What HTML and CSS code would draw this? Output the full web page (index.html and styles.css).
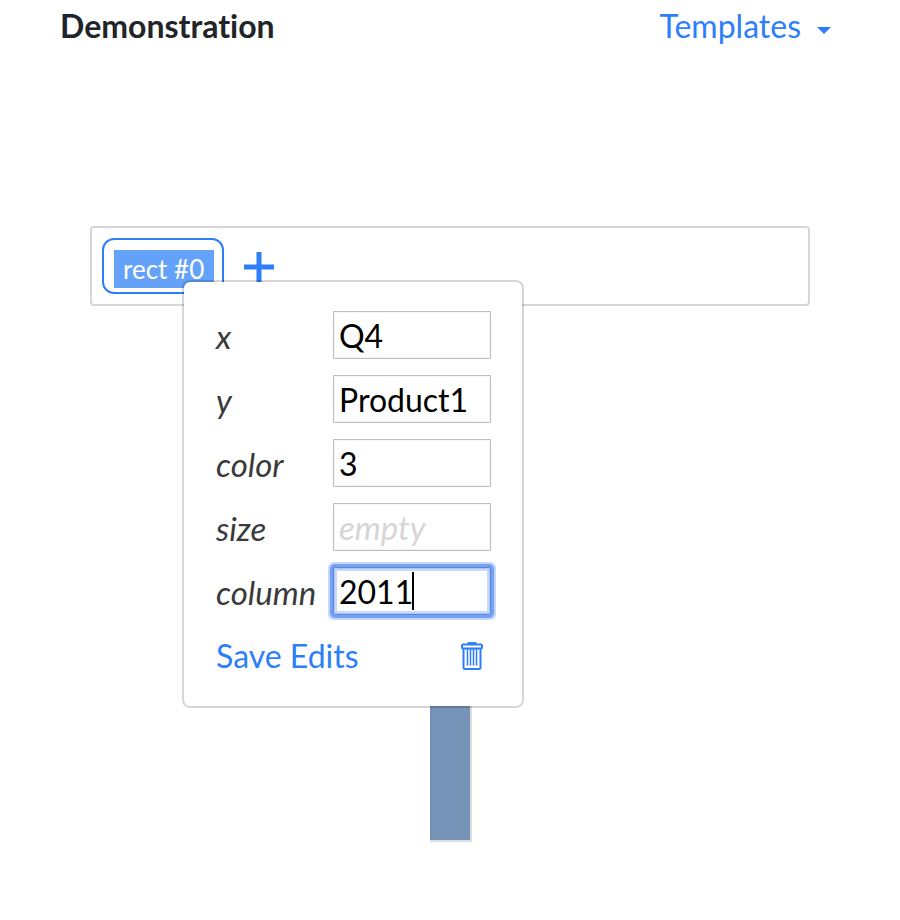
FILE: index.html
```html
<!DOCTYPE html>
<html lang="en">
<head>
<meta charset="utf-8">
<title>Demonstration</title>
<link rel="stylesheet" href="styles.css">
</head>
<body>
<header class="header">
  <h1 class="title">Demonstration</h1>
  <button class="templates" type="button">Templates
    <svg class="arrow" viewBox="0 0 14 7" aria-hidden="true"><path d="M0 0H14L7 7Z"/></svg>
  </button>
</header>
<main class="main">
  <section class="shelf">
    <button class="mark" type="button"><span class="mark-label">rect #0</span></button>
    <button class="add" type="button" aria-label="Add mark">
      <svg class="plus" viewBox="0 0 30 30" aria-hidden="true"><path d="M15 0V30M0 15H30"/></svg>
    </button>
    <form class="popover">
      <label class="name" for="x">x</label>
      <input class="field" id="x" type="text" value="Q4">
      <label class="name" for="y">y</label>
      <input class="field" id="y" type="text" value="Product1">
      <label class="name" for="color">color</label>
      <input class="field" id="color" type="text" value="3">
      <label class="name" for="size">size</label>
      <input class="field" id="size" type="text" placeholder="empty">
      <label class="name" for="column">column</label>
      <span class="active"><input class="field field-active" id="column" type="text" value="2011"><span class="caret"></span></span>
      <div class="actions">
        <button class="save" type="button">Save Edits</button>
        <button class="delete" type="button" aria-label="Delete mark">
          <svg class="trash" viewBox="0 0 24 28" aria-hidden="true">
            <path class="lid" d="M7 2Q7 0 9 0H15Q17 0 17 2Z"/>
            <rect x="2" y="2.500" width="20" height="4" rx="1"/>
            <path d="M3.500 7V25.500Q3.500 27 5 27H19Q20.500 27 20.500 25.500V7"/>
            <path class="slats" d="M7.500 7V23.500M10.500 7V23.500M13.500 7V23.500M16.500 7V23.500"/>
          </svg>
        </button>
      </div>
    </form>
  </section>
  <div class="chart"><div class="bar"></div></div>
</main>
</body>
</html>
```

FILE: styles.css
```css
* { box-sizing: border-box; }
body {
  margin: 0;
  background: #fff;
  color: #212529;
  font: 32px/48px Lato, sans-serif;
  font-variant-ligatures: none;
}
button {
  padding: 0;
  border: 0;
  background: none;
  color: #2d7ff9;
  font: inherit;
  font-variant-ligatures: none;
  cursor: pointer;
}
svg { display: block; fill: none; }
.header {
  display: flex;
  justify-content: space-between;
  padding: 2px 69px 0 60px;
}
.title { margin: 0; font: inherit; font-weight: 700; font-variant-ligatures: none; }
.templates { display: flex; align-items: center; gap: 16px; }
.arrow { width: 14px; height: 7px; margin-top: 8px; fill: #2d7ff9; }
.main { padding: 176px 90px 0; }
.shelf {
  position: relative;
  display: flex;
  align-items: flex-start;
  gap: 20px;
  padding: 10px;
  border: 2px solid #d6d6d6;
  border-radius: 4px;
  height: 80px;
}
.mark {
  padding: 10px 8px 4px 10px;
  border: 2px solid #2d7ff9;
  border-radius: 12px;
}
.mark-label {
  display: block;
  padding: 0 10px 0 9px;
  background: #64a2fa;
  color: #fff;
  font-size: 26px;
  line-height: 38px;
}
.add { margin-top: 14px; }
.plus { width: 30px; height: 30px; stroke: #2d7ff9; stroke-width: 5; }
.popover {
  position: absolute;
  top: 52px;
  left: 90px;
  display: grid;
  grid-template-columns: 101px 158px;
  gap: 16px;
  width: 342px;
  padding: 29px 31px 25px 32px;
  border: 2px solid rgba(0, 0, 0, 0.16);
  border-radius: 8px;
  background: #fff;
  background-clip: padding-box;
}
.name { color: #3a3a3a; font-size: 33px; font-style: italic; line-height: 50px; height: 48px; }
.field {
  width: 100%;
  height: 48px;
  padding: 2px 5px 0;
  border: 1px solid #bdbdbd;
  border-radius: 0;
  outline: 0;
  background: #fff;
  box-shadow: inset 0 0 0 1px #f5f5f5;
  color: #000;
  font: inherit;
}
.field::placeholder { color: #d6d6d6; font-size: 33px; font-style: italic; opacity: 1; }
.active { position: relative; height: 48px; display: flex; }
.field-active {
  border-color: #5b89de;
  box-shadow: inset 0 0 0 1px #aac4f4, inset 0 0 0 3px #c9daf8, 0 0 0 3px #76a1f3, 0 0 0 5px #c5d8fa;
  border-radius: 2px;
}
.caret {
  position: absolute;
  top: 5px;
  left: 79px;
  width: 2px;
  height: 38px;
  background: #000;
}
.actions {
  grid-column: 1 / -1;
  display: flex;
  justify-content: space-between;
  align-items: center;
  padding-right: 7px;
  height: 50px;
}
.trash { width: 24px; height: 28px; stroke: #2d7ff9; stroke-width: 2; }
.lid { fill: #2d7ff9; stroke: none; }
.slats { stroke-width: 1.5; }
.chart { display: flex; justify-content: center; padding: 334px 0 0 2px; }
.bar {
  width: 42px;
  height: 202px;
  border: solid #ddd;
  border-width: 0 2px 2px 0;
  background: #7693b8;
  box-shadow: inset 2px 0 #6f91b7;
}
```
